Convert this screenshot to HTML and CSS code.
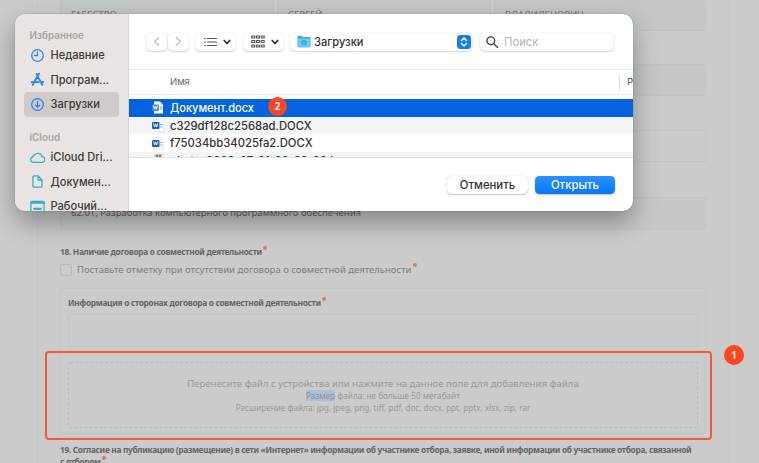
FILE: index.html
```
<!DOCTYPE html>
<html lang="ru">
<head>
<meta charset="utf-8">
<title>Загрузка файла</title>
<link rel="stylesheet" href="styles.css">
</head>
<body>
<main class="form">
  <div class="names">
    <div class="field tinted">ГАБЕСТРО</div>
    <div class="field tinted">СЕРГЕЙ</div>
    <div class="field tinted">ВЛАДИЛЕНОВИЧ</div>
  </div>
  <div class="field tinted single"></div>
  <div class="field single"></div>
  <div class="field filled single activity">62.01, Разработка компьютерного программного обеспечения</div>

  <h2 class="label">18. Наличие договора о совместной деятельности<i class="req"></i></h2>
  <label class="check"><span class="box"></span><span>Поставьте отметку при отсутствии договора о совместной деятельности</span><i class="req"></i></label>

  <section class="group">
    <h3 class="label">Информация о сторонах договора о совместной деятельности<i class="req"></i></h3>
    <div class="field input"></div>
    <div class="drop">
      <svg class="dash"><rect x="0.5" y="0.5" width="629" height="65" rx="2"/></svg>
      <p class="drop-title">Перенесите файл с устройства или нажмите на данное поле для добавления файла</p>
      <p><mark>Размер</mark> файла: не больше 50 мегабайт</p>
      <p>Расширение файла: jpg, jpeg, png, tiff, pdf, doc, docx, ppt, pptx, xlsx, zip, rar</p>
    </div>
  </section>

  <h2 class="label consent">19. Согласие на публикацию (размещение) в сети «Интернет» информации об участнике отбора, заявке, иной информации об участнике отбора, связанной<br>с отбором<i class="req"></i></h2>
</main>

<div class="frame"></div>
<span class="badge badge-one">1</span>

<div class="dialog">
  <aside class="side">
    <h4>Избранное</h4>
    <div class="item">
      <svg viewBox="0 0 16 16"><circle cx="8" cy="8" r="6.2"/><path d="M8 4.2V8H4.6"/></svg>Недавние</div>
    <div class="item">
      <svg viewBox="0 0 16 16" class="thick"><path d="M7 2l1.2 2M9.6 1.8L4.4 11M7.9 4.4L13.2 13.6M1.8 10.8h7.400M12 10.8h2.200M3.6 12.6l-.7 1.2"/></svg>Програм...</div>
    <div class="item active">
      <svg viewBox="0 0 16 16"><circle cx="8" cy="8" r="6.2"/><path d="M8 4.9v5.900M5.7 8.7L8 11l2.3-2.3"/></svg>Загрузки</div>
    <h4 class="cloud-title">iCloud</h4>
    <div class="item teal">
      <svg viewBox="0 0 16 16"><path d="M3.600 13.200a3 3 0 0 1-.6-5.900A2.500 2.500 0 0 1 5.500 5 4.200 4.200 0 0 1 12.800 7a3.100 3.100 0 0 1-.2 6.200z"/></svg>iCloud Dri...</div>
    <div class="item teal">
      <svg viewBox="0 0 16 16"><path d="M4.3 2h4.5l4 4.2v6.600a1.200 1.200 0 0 1-1.200 1.200H4.300a1.200 1.200 0 0 1-1.200-1.200V3.200A1.200 1.200 0 0 1 4.300 2zM8.600 2v4.400h4.200"/></svg>Докумен...</div>
    <div class="item teal">
      <svg viewBox="0 0 16 16"><rect x="1" y="2.500" width="14" height="12" rx="1"/><path d="M1 4h14M4.500 10.500h7" stroke-width="2.200"/></svg>Рабочий...</div>
  </aside>

  <div class="content">
    <div class="toolbar">
      <div class="nav">
        <span class="ctl"><svg viewBox="0 0 8 12"><path d="M6.500 1.500L1.800 6l4.700 4.500"/></svg></span>
        <span class="ctl"><svg viewBox="0 0 8 12"><path d="M1.500 1.500L6.200 6l-4.700 4.500"/></svg></span>
      </div>
      <span class="ctl view">
        <svg class="list" viewBox="0 0 13 10"><path d="M3.500 1.500H12.500M3.500 5H12.500M3.500 8.500H12.500M.6 1.500h.8M.6 5h.8M.6 8.500h.8"/></svg>
        <svg class="chev" viewBox="0 0 8 6"><path d="M1.200 1.500L4 4.300l2.800-2.800"/></svg>
      </span>
      <span class="ctl view group-view">
        <svg class="grid" viewBox="0 0 14 13"><path d="M.8 1h3v2h-3zM5.500 1h3v2h-3zM10.200 1h3v2h-3zM.8 5.500h3v2h-3zM5.500 5.500h3v2h-3zM10.200 5.500h3v2h-3zM.8 10h3v2h-3zM5.500 10h3v2h-3zM10.200 10h3v2h-3z"/></svg>
        <svg class="chev" viewBox="0 0 8 6"><path d="M1.200 1.500L4 4.300l2.800-2.800"/></svg>
      </span>
      <span class="ctl place">
        <svg class="folder" viewBox="0 0 14 13"><path d="M.5 2Q.5.800 1.500.800h3.300L6 2h6.500q1 0 1 1v8.200q0 1-1 1h-11q-1 0-1-1z" fill="#3fa9d5"/><path d="M.5 3.600h13v7.600q0 1-1 1h-11q-1 0-1-1z" fill="#6ccdf2"/><circle cx="7" cy="7.800" r="2.300" fill="#5cb9e0" stroke="#2f9fd0"/></svg>
        <span>Загрузки</span>
        <span class="stepper"><svg viewBox="0 0 14 14"><path d="M4.500 5.500L7 3l2.500 2.500M4.500 8.500L7 11l2.500-2.500"/></svg></span>
      </span>
      <span class="ctl search">
        <svg viewBox="0 0 12 12"><circle cx="4.800" cy="4.800" r="3.900"/><path d="M7.700 7.700l3.600 3.600"/></svg>Поиск</span>
    </div>
    <div class="columns"><span class="name">Имя</span><span class="size">Ра</span></div>
    <div class="files">
      <div class="file selected">
        <svg viewBox="0 0 12 13"><path d="M2 .5h6l3 3v9H2z" fill="#fff"/><path d="M7.800.500l3.200 3.200H7.800z" fill="#c4d5ee"/><rect y="3.500" width="7" height="6.500" rx="1" fill="#4b83cc"/><path d="M1.500 5l1 3.200 1-3 1 3 1-3.200" stroke="#fff" fill="none" stroke-width=".9"/><path d="M8 6h2M8 8h2" stroke="#6c9ad8"/></svg>
        <span>Документ.docx</span><span class="badge">2</span></div>
      <div class="file">
        <svg viewBox="0 0 12 13"><path d="M2.500.500h6l3 3v9h-9z" fill="#fff" stroke="#dfe1e2" stroke-width=".7"/><rect y="3" width="7.500" height="7" rx="1" fill="#1b5fc4"/><path d="M1.700 4.800l1 3.200 1-3 1 3 1-3.200" stroke="#fff" fill="none" stroke-width=".9"/><path d="M8.500 5.500h1.800M8.500 8h1.800" stroke="#7fb2ee" stroke-width="1.200"/></svg>
        <span>c329df128c2568ad.DOCX</span></div>
      <div class="file">
        <svg viewBox="0 0 12 13"><path d="M2.500.500h6l3 3v9h-9z" fill="#fff" stroke="#dfe1e2" stroke-width=".7"/><rect y="3" width="7.500" height="7" rx="1" fill="#1b5fc4"/><path d="M1.700 4.800l1 3.200 1-3 1 3 1-3.200" stroke="#fff" fill="none" stroke-width=".9"/><path d="M8.500 5.500h1.800M8.500 8h1.800" stroke="#7fb2ee" stroke-width="1.200"/></svg>
        <span>f75034bb34025fa2.DOCX</span></div>
      <div class="file">
        <svg viewBox="0 0 12 13"><rect x="2.500" y="0" width="8" height="13" fill="#c9c7c0"/><path d="M5 1.500v4M8 1.500v4" stroke="#66635c" stroke-width="1.600"/></svg>
        <span>photo_2023-07-21_09-29-33.jpg</span></div>
    </div>
    <div class="actions"><span class="btn">Отменить</span><span class="btn primary">Открыть</span></div>
  </div>
</div>
</body>
</html>
```
FILE: styles.css
```
* { box-sizing: border-box; }
body {
  margin: 0;
  width: 759px;
  height: 463px;
  overflow: hidden;
  position: relative;
  background: #cbcbcb;
  font-family: "Noto Sans", sans-serif;
  color: #666;
}
h2, h3, h4, p { margin: 0; }
svg { display: block; flex: none; fill: none; stroke-linecap: round; stroke-linejoin: round; }

.form {
  margin-left: 37px;
  width: 692px;
  height: 463px;
  padding: 0 22px;
  border: solid #c7c7c7;
  border-width: 0 1px;
  overflow: hidden;
}
.names { display: grid; grid-template-columns: 214px 214px 212px; gap: 3px; }
.field {
  height: 32px;
  border: 1px solid #c4c4c4;
  border-radius: 2px;
  padding: 0 10px;
  font-size: 9.5px;
  line-height: 27px;
}
.names .field { height: 31px; border-top: 0; line-height: 29px; }
.tinted { background: #c3c7c5; border-color: #bfc4c2; color: #777; }
.filled { background: #c7c7c7; }
.single { margin-top: 34px; }
.names + .single { margin-top: 33px; }
.activity { height: 33px; margin-top: 35px; line-height: 29px; color: #636363; }

.label {
  font-size: 8.4px;
  font-weight: 700;
  line-height: 12px;
  letter-spacing: -.33px;
  color: #666;
  white-space: nowrap;
}
h2.label { height: 12px; margin-top: 16px; }
.req {
  display: inline-block;
  width: 4px;
  height: 4px;
  margin-left: 1px;
  border-radius: 50%;
  background: #cf7f6c;
  vertical-align: 5px;
}
.check { display: flex; align-items: center; height: 13px; margin-top: 5px; font-size: 9.5px; color: #7d7d7d; white-space: nowrap; }
.check .req { margin-bottom: 9px; }
.box { width: 12px; height: 12px; margin-right: 5px; border: 1px solid #bababa; border-radius: 2px; }

.group { height: 146px; margin-top: 12px; padding: 8px 7px 0; border: 1px solid #c5c5c5; border-radius: 3px; }
.input { height: 33px; margin-top: 5px; }
.group .label { height: 12px; }
.drop { position: relative; height: 66px; margin-top: 15px; padding-top: 15px; text-align: center; font-size: 8.2px; line-height: 12px; color: #999; }
.drop-title { font-size: 9.6px; line-height: 14px; margin-bottom: -1px; }
.drop p:last-child { font-size: 8.17px; }
.dash { position: absolute; inset: 0; width: 630px; height: 66px; stroke: #bababa; stroke-dasharray: 2.500 2.500; stroke-linecap: butt; }
mark { background: #afbfd3; color: #8793a0; }
h2.consent { height: auto; margin-top: 10px; letter-spacing: -.343px; }

.frame { position: absolute; left: 45px; top: 351px; width: 667px; height: 89px; border: 2px solid #ef5a3c; border-radius: 4px; }
.badge {
  width: 19px;
  height: 19px;
  border-radius: 50%;
  background: #fa4723;
  color: #fff;
  font: 600 10px/19px "Noto Sans", sans-serif;
  text-align: center;
}
.badge-one { position: absolute; left: 724px; top: 345px; width: 20px; height: 20px; line-height: 20px; }

.dialog {
  position: absolute;
  left: 15px;
  top: 14px;
  width: 618px;
  height: 197px;
  display: flex;
  overflow: hidden;
  border-radius: 10px;
  background: #fff;
  box-shadow: 0 0 1px rgba(0,0,0,.55), 0 11px 26px rgba(0,0,0,.33);
  font-family: Inter, sans-serif;
  font-weight: 500;
  color: #333;
}
.side { width: 114px; height: 197px; flex: none; padding: 15px 9px 0 9px; background: #e9e4e1; border-right: 1px solid #d9d5d2; overflow: hidden; }
.side h4 { margin-bottom: 1px; padding-left: 5.500px; font-size: 9.9px; line-height: 13px; font-weight: 600; color: #aaa5a2; }
.side .cloud-title { margin: 14px 0 1px; }
.item { display: flex; align-items: center; height: 24.6px; padding-left: 6px; border-radius: 4px; font-size: 11.05px; white-space: nowrap; color: #3c3937; }
.item svg { width: 15px; height: 15px; margin-right: 5.500px; stroke: #2583f5; stroke-width: 1.35; }
.item.teal svg { stroke: #2bb3c4; }
.item svg.thick { stroke-width: 2; }
.active { background: #d0cbc8; }

.content { flex: 1; min-width: 0; height: 197px; }
.toolbar { display: flex; align-items: center; height: 56px; padding-left: 17px; border-bottom: 1px solid #e9e9e9; }
.ctl { display: flex; align-items: center; height: 18px; border-radius: 5px; background: #fff; box-shadow: 0 0 1px rgba(0,0,0,.22), 0 1px 1.500px rgba(0,0,0,.16); }
.nav { display: flex; gap: 1px; }
.nav .ctl { width: 21px; justify-content: center; }
.nav svg { width: 7px; height: 11px; stroke: #b5b5b5; stroke-width: 1.2; }
.view { width: 41px; margin-left: 6px; padding: 0 5px 0 9px; justify-content: space-between; }
.view.group-view { margin-left: 7px; padding: 0 5px 0 8px; }
.list { width: 13px; height: 10px; stroke: #555; stroke-width: 1.1; }
.grid { width: 14px; height: 13px; stroke: #555; stroke-width: 1.1; }
.chev { width: 8px; height: 6px; stroke: #333; stroke-width: 1.7; }
.place { width: 182px; margin-left: 6px; padding: 0 1px 0 7px; font-size: 11.1px; }
.folder { width: 14px; height: 13px; margin-right: 3px; }
.stepper { width: 14px; height: 14px; margin-left: auto; border-radius: 3.500px; background: #147bfb; }
.stepper svg { width: 14px; height: 14px; stroke: #fff; stroke-width: 1.5; }
.search { width: 134px; margin-left: 8px; padding-left: 6px; font-size: 11.3px; font-weight: 400; color: #b3b3b3; }
.search svg { width: 12px; height: 12px; margin-right: 6px; stroke: #444; stroke-width: 1.4; }

.columns { display: flex; align-items: center; height: 25px; padding-left: 41px; border-bottom: 1px solid #eee; font-size: 9.6px; font-weight: 400; color: #6b6b6b; }
.name { margin-top: -2px; }
.size { margin-left: auto; width: 14px; height: 17px; padding-left: 7px; border-left: 1px solid #dedede; line-height: 16px; overflow: hidden; font-weight: 500; }
.files { height: 63px; padding-top: 4px; border-bottom: 1px solid #e3e5e5; overflow: hidden; }
.file { display: flex; align-items: center; height: 17.7px; padding-left: 23px; font-size: 11.270px; white-space: nowrap; }
.file svg { width: 12px; height: 13px; margin-right: 6px; }
.file:nth-child(even) { background: #f3f5f5; }
.file.selected { background: #0464e0; color: #fff; font-size: 11.05px; }
.file .badge { position: absolute; left: 253px; top: 83px; line-height: 19px; }
.actions { display: flex; justify-content: flex-end; gap: 7px; padding: 18px 18px 0 0; }
.btn { width: 81px; height: 18px; border-radius: 4.500px; font-size: 11.3px; line-height: 18px; text-align: center; box-shadow: 0 0 1px rgba(0,0,0,.28), 0 1px 1.500px rgba(0,0,0,.2); }
.primary { width: 80px; background: linear-gradient(#2c90ff, #0877fb); color: #fff; }
.files .file:nth-child(even), .files .file:last-child { background: #f3f5f5; }
.files .file:nth-child(3) { background: #fff; }
```
